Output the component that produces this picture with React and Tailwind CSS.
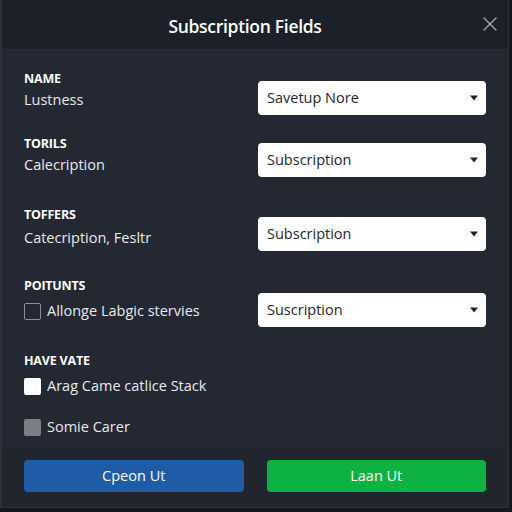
import { X } from 'lucide-react';

const font = { fontFamily: '"Open Sans", "Noto Sans", sans-serif' };

function Select({ value, className = '' }) {
  return (
    <div className={`flex h-[34px] w-[228px] items-center justify-between rounded-[4px] bg-white pl-[9px] pr-[8px] text-[14.5px] text-[#23262c] ${className}`}>
      <span>{value}</span>
      <svg width="8" height="6" viewBox="0 0 8 6">
        <path d="M0 0.5 L8 0.5 L4 5.5 Z" fill="#222" />
      </svg>
    </div>
  );
}

function Label({ children }) {
  return <div className="text-[12.5px] font-bold leading-4 tracking-[-0.2px] text-white">{children}</div>;
}

function Checkbox({ tone }) {
  const styles = {
    empty: 'border-[1.5px] border-[#8b9099] bg-transparent',
    white: 'bg-white',
    gray: 'bg-[#7c7f85]',
  };
  return <div className={`h-[17px] w-[17px] shrink-0 rounded-[2px] ${styles[tone]}`} />;
}

export default function App() {
  return (
    <div className="h-[512px] w-[512px] bg-[#14171c]" style={font}>
      <div className="flex h-[508px] w-[509px] flex-col border-l-2 border-r border-b border-[#2c313a] bg-[#232832]">
        {/* header */}
        <div className="relative flex h-[50px] shrink-0 items-center justify-center border-b border-[#262b34] bg-[#1b2029] pr-[20px] pt-[3px]">
          <h1 className="text-[17.5px] font-semibold tracking-[-0.3px] text-white">Subscription Fields</h1>
          <X className="absolute right-[6px] top-[12px] h-6 w-6 text-[#a9adb4]" strokeWidth={1.3} />
        </div>

        {/* body */}
        <div className="flex flex-1 flex-col px-[22px] text-[14.5px] text-[#e8eaee]">
          <div className="mt-[21px] flex justify-between">
            <div>
              <Label>NAME</Label>
              <div className="mt-[3px] leading-5">Lustness</div>
            </div>
            <Select value="Savetup Nore" className="mt-[10px]" />
          </div>

          <div className="mt-[21px] flex justify-between">
            <div>
              <Label>TORILS</Label>
              <div className="mt-[3px] leading-5">Calecription</div>
            </div>
            <Select value="Subscription" className="mt-[7px]" />
          </div>

          <div className="mt-[30px] flex justify-between">
            <div>
              <Label>TOFFERS</Label>
              <div className="mt-[5px] leading-5">Catecription, Fesltr</div>
            </div>
            <Select value="Subscription" className="mt-[10px]" />
          </div>

          <div className="mt-[27px] flex justify-between">
            <div>
              <Label>POITUNTS</Label>
              <div className="mt-[7px] flex items-center gap-[6px] leading-5">
                <Checkbox tone="empty" />
                <span>Allonge Labgic stervies</span>
              </div>
            </div>
            <Select value="Suscription" className="mt-[15px]" />
          </div>

          <div className="mt-[26px]">
            <Label>HAVE VATE</Label>
            <div className="mt-[7px] flex items-center gap-[6px] leading-5">
              <Checkbox tone="white" />
              <span>Arag Came catlice Stack</span>
            </div>
            <div className="mt-[21px] flex items-center gap-[6px] leading-5">
              <Checkbox tone="gray" />
              <span>Somie Carer</span>
            </div>
          </div>
        </div>

        {/* footer */}
        <div className="flex h-[60px] shrink-0 items-start gap-[23px] border-t border-[#262b34] bg-[#20252e] px-[22px] pt-[12px]">
          <button className="h-[32px] w-[220px] rounded-[4px] bg-[#1e5ca8] text-[14.5px] text-white">Cpeon Ut</button>
          <button className="h-[32px] w-[220px] rounded-[4px] bg-[#0cb342] text-[14.5px] text-white">Laan Ut</button>
        </div>
      </div>
    </div>
  );
}
